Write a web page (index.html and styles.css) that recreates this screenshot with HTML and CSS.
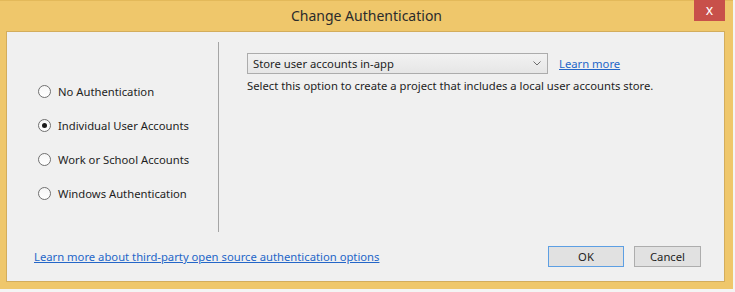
FILE: index.html
```html
<!DOCTYPE html>
<html lang="en">
<head>
    <meta charset="UTF-8">
    <title>Change Authentication</title>
    <link rel="stylesheet" href="styles.css">
</head>
<body>
    <div class="window">
        <!-- Title bar -->
        <div class="title-bar">
            <span class="title">Change Authentication</span>
            <span class="close-btn">x</span>
        </div>

        <div class="content">
            <div class="main">
                <!-- Left: auth options -->
                <div class="options">
                    <label class="option"><span class="radio"></span>No Authentication</label>
                    <label class="option"><span class="radio checked"></span>Individual User Accounts</label>
                    <label class="option"><span class="radio"></span>Work or School Accounts</label>
                    <label class="option"><span class="radio"></span>Windows Authentication</label>
                </div>

                <!-- Right: details -->
                <div class="details">
                    <div class="select-row">
                        <div class="select">
                            <span>Store user accounts in-app</span>
                            <svg class="chevron" width="8" height="5" viewBox="0 0 8 5">
                                <path d="M0.5 0.5 L4 4 L7.5 0.5" fill="none" stroke="#6d6d6d" stroke-width="1"/>
                            </svg>
                        </div>
                        <a class="link" href="#">Learn more</a>
                    </div>
                    <p class="desc">Select this option to create a project that includes a local user accounts store.</p>
                </div>
            </div>

            <div class="footer">
                <a class="link" href="#">Learn more about third-party open source authentication options</a>
                <div class="buttons">
                    <button class="btn default">OK</button>
                    <button class="btn">Cancel</button>
                </div>
            </div>
        </div>
    </div>
</body>
</html>
```

FILE: styles.css
```css
/* General */
body {
    margin: 0;
    background-color: #f4f4f4;
    font-family: "Noto Sans", "Open Sans", sans-serif;
    font-size: 11.25px;
    color: #1e1e1e;
}

/* Window frame */
.window {
    width: 733px;
    height: 289px;
    box-sizing: border-box;
    background-color: #efc76b;
    border-top: 1px solid #e3b95a;
    display: flex;
    flex-direction: column;
}

.title-bar {
    height: 30px;
    position: relative;
    display: flex;
    align-items: center;
    justify-content: center;
}

.title {
    font-size: 14px;
    color: #2b2b2b;
    margin-top: -1px;
}

.close-btn {
    position: absolute;
    top: -1px;
    right: 8px;
    width: 31px;
    height: 21px;
    background-color: #c8504a;
    color: #fff;
    font-size: 14px;
    line-height: 19px;
    text-align: center;
}

/* Content area */
.content {
    margin: 0 8px 7px 6px;
    flex: 1;
    background-color: #f0f0f0;
    border: 1px solid #d3ad5c;
    display: flex;
    flex-direction: column;
}

.main {
    display: flex;
    margin-top: 10px;
    height: 190px;
}

.options {
    width: 212px;
    box-sizing: border-box;
    border-right: 1px solid #a5a5a5;
    padding: 32px 0 0 31px;
}

.option {
    display: flex;
    align-items: center;
    height: 34px;
}

.radio {
    width: 11px;
    height: 11px;
    border: 1px solid #707070;
    border-radius: 50%;
    background: linear-gradient(#f6f6f6, #ffffff);
    margin-right: 7px;
    position: relative;
    flex-shrink: 0;
}

.radio.checked::after {
    content: "";
    position: absolute;
    left: 3px;
    top: 3px;
    width: 5px;
    height: 5px;
    border-radius: 50%;
    background-color: #1a1a1a;
}

.details {
    padding: 11px 0 0 28px;
}

.select-row {
    display: flex;
    align-items: center;
}

.select {
    width: 288px;
    height: 19px;
    border: 1px solid #acacac;
    background: linear-gradient(#f2f2f2, #e6e6e6);
    display: flex;
    align-items: center;
    justify-content: space-between;
    padding: 0 6px 0 5px;
    box-sizing: content-box;
    margin-right: 11px;
}

.select span {
    margin-top: -1px;
}

.link {
    color: #2466c8;
    text-decoration: underline;
}

.desc {
    margin: 4px 0 0 0;
}

/* Footer */
.footer {
    flex: 1;
    display: flex;
    align-items: center;
    justify-content: space-between;
    padding: 0 23px 0 27px;
}

.buttons {
    display: flex;
    gap: 10px;
}

.btn {
    font-family: inherit;
    font-size: 11.25px;
    color: #1e1e1e;
    height: 21px;
    width: 67px;
    padding: 0;
    background-color: #e1e1e1;
    border: 1px solid #adadad;
}

.btn.default {
    width: 76px;
    border-color: #5d9fe3;
}
```
